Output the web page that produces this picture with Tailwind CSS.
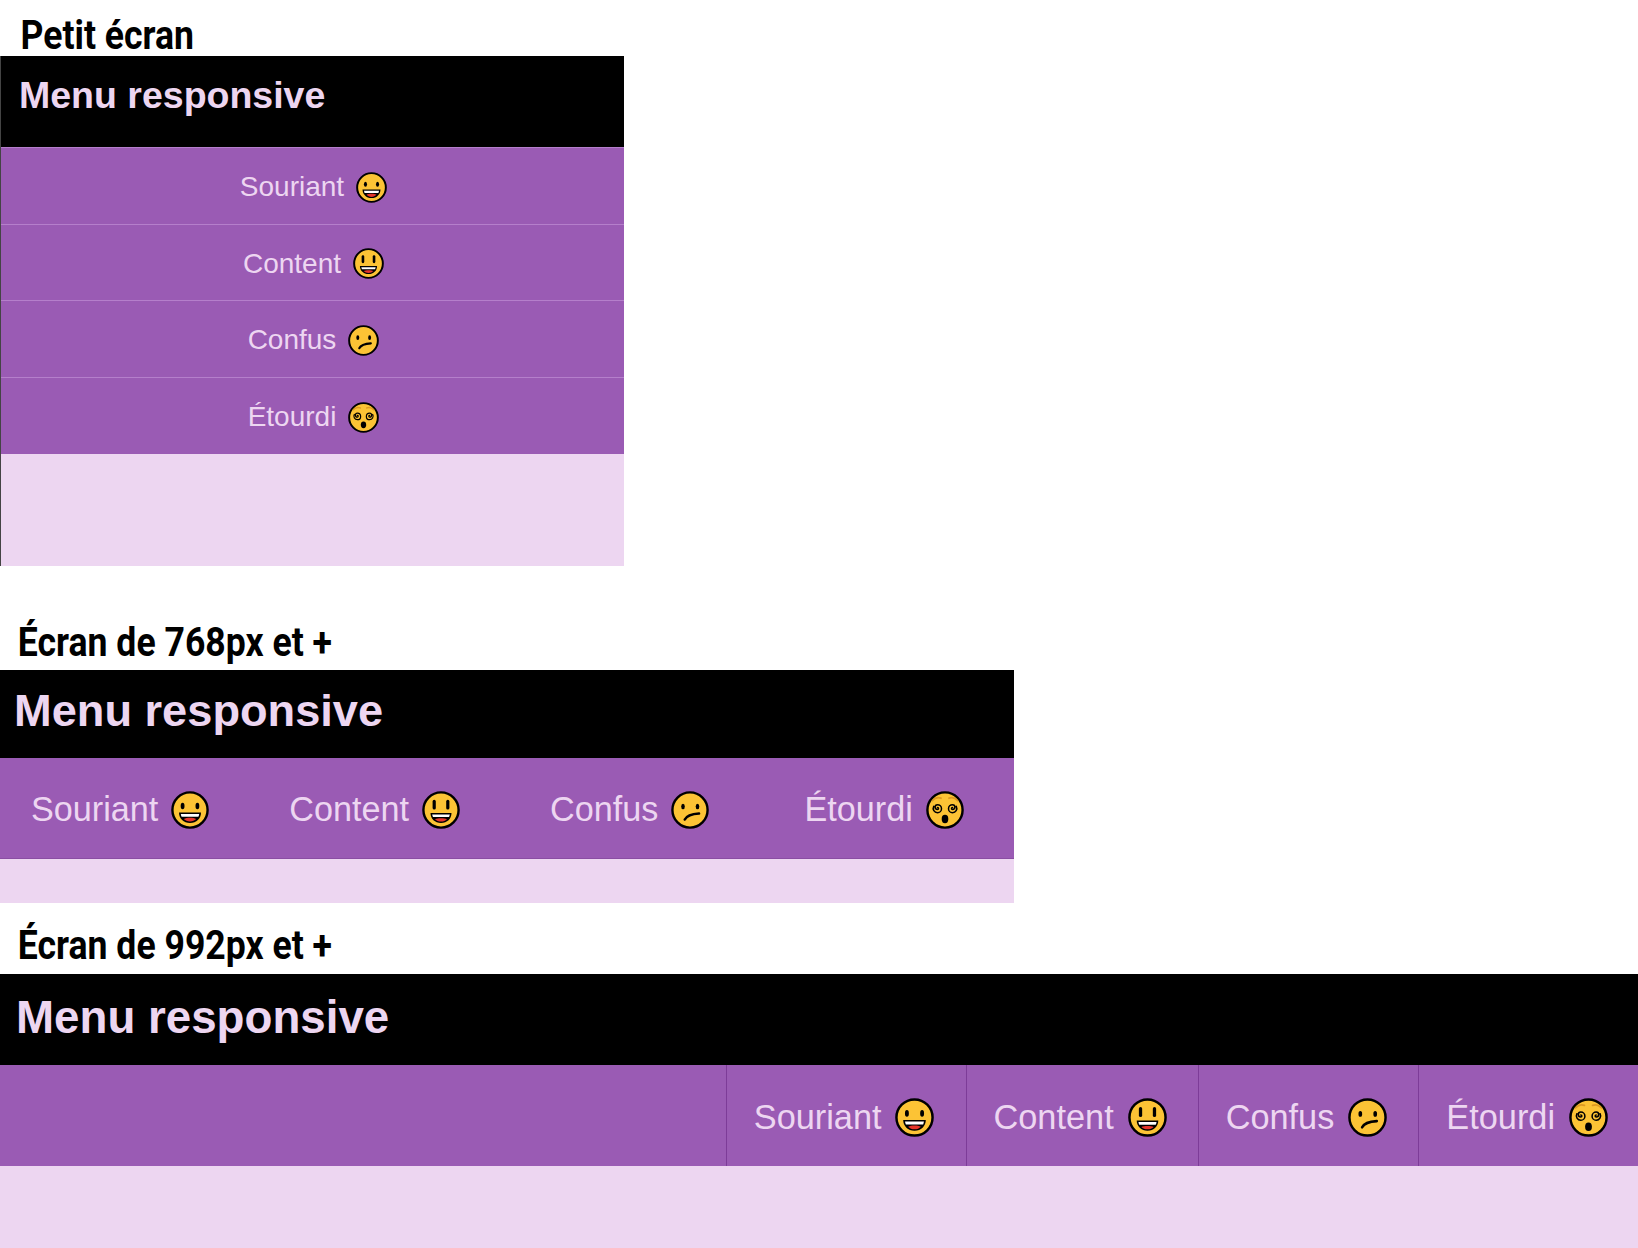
<!DOCTYPE html>
<html lang="fr">
<head>
  <meta charset="UTF-8">
  <meta name="viewport" content="width=device-width, initial-scale=1.0">
  <title>Menu responsive</title>
  <script src="https://cdn.jsdelivr.net/npm/@tailwindcss/browser@4"></script>
</head>
<body class="bg-white font-['Liberation_Sans',Arial,sans-serif] text-[#edd6f1] overflow-hidden h-[1248px]">
  <!-- emoji faces, reused in the three menus -->
  <svg class="hidden">
    <symbol id="souriant" viewBox="0 0 38 38">
      <circle cx="19" cy="19" r="17.6" fill="#fcc335" stroke="#000" stroke-width="2.4"/>
      <ellipse cx="11.600" cy="15" rx="1.900" ry="3.200"/>
      <ellipse cx="26.400" cy="15" rx="1.900" ry="3.200"/>
      <path d="M8 21.500h22c0 6-4.600 10.500-11 10.500s-11-4.500-11-10.500z" fill="#000"/>
      <path d="M9.800 23h18.400c-.1 1.100-.4 2-.8 2.800H10.600c-.4-.8-.7-1.700-.8-2.800z" fill="#fff"/>
      <path d="M12.800 28c1.500 1.600 3.700 2.500 6.200 2.500s4.700-.9 6.200-2.500c-1.500-.8-3.700-1.200-6.200-1.200s-4.700.4-6.200 1.200z" fill="#e5352b"/>
    </symbol>
    <symbol id="content" viewBox="0 0 38 38">
      <circle cx="19" cy="19" r="17.6" fill="#fcc335" stroke="#000" stroke-width="2.400"/>
      <rect x="10.600" y="8.800" width="3.200" height="9.800" rx="1.600"/>
      <rect x="24.200" y="8.800" width="3.200" height="9.800" rx="1.600"/>
      <path d="M8.500 22h21c0 5.800-4.400 10-10.500 10s-10.500-4.200-10.500-10z" fill="#000"/>
      <path d="M10.200 23.500h17.600c-.1 1-.4 1.800-.8 2.600H11c-.4-.8-.7-1.600-.8-2.600z" fill="#fff"/>
      <path d="M13 28.200c1.500 1.500 3.600 2.300 6 2.300s4.500-.8 6-2.300c-1.500-.7-3.600-1-6-1s-4.500.3-6 1z" fill="#e5352b"/>
    </symbol>
    <symbol id="confus" viewBox="0 0 38 38">
      <circle cx="19" cy="19" r="17.6" fill="#fcc335" stroke="#000" stroke-width="2.400"/>
      <ellipse cx="12" cy="15.500" rx="1.800" ry="2.800"/>
      <ellipse cx="26.500" cy="15.500" rx="1.800" ry="2.800"/>
      <path d="M13.800 28.500c1.800-3.600 6-5.500 14.200-6" fill="none" stroke="#000" stroke-width="2.600" stroke-linecap="round"/>
    </symbol>
    <symbol id="etourdi" viewBox="0 0 38 38">
      <circle cx="19" cy="19" r="17.6" fill="#fcc335" stroke="#000" stroke-width="2.400"/>
      <path d="M6.500 9.500c2.200-2.500 5.500-3.400 8.500-2.300M31.500 9.500c-2.200-2.500-5.500-3.400-8.500-2.300" fill="none" stroke="#dd9a22" stroke-width="1.800" stroke-linecap="round"/>
      <path d="M11.500 16.500A1 1 0 0 1 11.500 18.500A2.400 2.400 0 0 1 11.500 13.700A4 4 0 0 1 11.500 21.700A4.400 4.400 0 0 1 7.700 15.300" fill="none" stroke="#000" stroke-width="1.500" stroke-linecap="round"/>
      <path d="M26.500 16.500A1 1 0 0 0 26.500 18.500A2.400 2.400 0 0 0 26.500 13.700A4 4 0 0 0 26.500 21.700A4.400 4.400 0 0 0 30.300 15.300" fill="none" stroke="#000" stroke-width="1.500" stroke-linecap="round"/>
      <ellipse cx="19" cy="28" rx="3.300" ry="4.200"/>
    </symbol>
  </svg>

  <!-- petit ecran -->
  <h2 class="h-[56px] pl-[23px] pt-[14px] font-['Roboto',sans-serif] font-bold text-[40px] leading-[44px] text-black scale-x-[0.89] origin-left">Petit écran</h2>
  <section class="w-[624px] h-[510px] bg-[#edd6f1] border-l border-l-[#444]">
    <header class="h-[91px] bg-black pl-[18px] pt-[16px]">
      <h1 class="font-bold text-[37.500px] leading-[46px]">Menu responsive</h1>
    </header>
    <ul class="bg-[#9a5bb4] text-[28px]">
      <li class="h-[77px] pt-[2px] pl-[2px] border-t border-t-[#b57fcb] flex items-center justify-center gap-[12px]">Souriant <svg class="w-[31px] h-[31px]"><use href="#souriant"/></svg></li>
      <li class="h-[76px] pt-[2px] pl-[2px] border-t border-t-[#b57fcb] flex items-center justify-center gap-[12px]">Content <svg class="w-[31px] h-[31px]"><use href="#content"/></svg></li>
      <li class="h-[77px] pt-[2px] pl-[2px] border-t border-t-[#b57fcb] flex items-center justify-center gap-[12px]">Confus <svg class="w-[31px] h-[31px]"><use href="#confus"/></svg></li>
      <li class="h-[77px] pt-[2px] pl-[2px] border-t border-t-[#b57fcb] flex items-center justify-center gap-[12px]">Étourdi <svg class="w-[31px] h-[31px]"><use href="#etourdi"/></svg></li>
    </ul>
  </section>

  <!-- 768px -->
  <h2 class="h-[104px] pl-[20px] pt-[55px] font-['Roboto',sans-serif] font-bold text-[40px] leading-[44px] text-black scale-x-[0.89] origin-left">Écran de 768px et +</h2>
  <section class="w-[1014px] h-[233px] bg-[#edd6f1]">
    <header class="h-[88px] bg-black pl-[14px] pt-[15px]">
      <h1 class="font-bold text-[45.200px] leading-[52px]">Menu responsive</h1>
    </header>
    <ul class="h-[101px] pt-[4px] bg-[#9a5bb4] border-b border-b-[#8a4ea3] flex items-center pl-[31px] text-[34.200px]">
      <li class="flex items-center gap-[13px]">Souriant <svg class="w-[38px] h-[38px]"><use href="#souriant"/></svg></li>
      <li class="flex items-center gap-[13px] ml-[80px]">Content <svg class="w-[38px] h-[38px]"><use href="#content"/></svg></li>
      <li class="flex items-center gap-[13px] ml-[90px]">Confus <svg class="w-[38px] h-[38px]"><use href="#confus"/></svg></li>
      <li class="flex items-center gap-[13px] ml-[95px]">Étourdi <svg class="w-[38px] h-[38px]"><use href="#etourdi"/></svg></li>
    </ul>
  </section>

  <!-- 992px -->
  <h2 class="h-[71px] pl-[20px] pt-[21px] font-['Roboto',sans-serif] font-bold text-[40px] leading-[44px] text-black scale-x-[0.89] origin-left">Écran de 992px et +</h2>
  <section class="w-full h-[274px] bg-[#edd6f1]">
    <header class="h-[91px] bg-black pl-[16px] pt-[18px]">
      <h1 class="font-bold text-[45.700px] leading-[52px]">Menu responsive</h1>
    </header>
    <ul class="h-[101px] pt-[4px] bg-[#9a5bb4] flex justify-end text-[34.300px]">
      <li class="-mt-[4px] border-l border-l-[#7d3c98] flex items-center gap-[13px] pt-[4px] pl-[27px] pr-[32px]">Souriant <svg class="w-[39px] h-[39px]"><use href="#souriant"/></svg></li>
      <li class="-mt-[4px] border-l border-l-[#7d3c98] flex items-center gap-[14px] pt-[4px] pl-[27px] pr-[31px]">Content <svg class="w-[39px] h-[39px]"><use href="#content"/></svg></li>
      <li class="-mt-[4px] border-l border-l-[#7d3c98] flex items-center gap-[14px] pt-[4px] pl-[27px] pr-[31px]">Confus <svg class="w-[39px] h-[39px]"><use href="#confus"/></svg></li>
      <li class="-mt-[4px] border-l border-l-[#7d3c98] flex items-center gap-[14px] pt-[4px] pl-[27px] pr-[30px]">Étourdi <svg class="w-[39px] h-[39px]"><use href="#etourdi"/></svg></li>
    </ul>
  </section>
</body>
</html>
